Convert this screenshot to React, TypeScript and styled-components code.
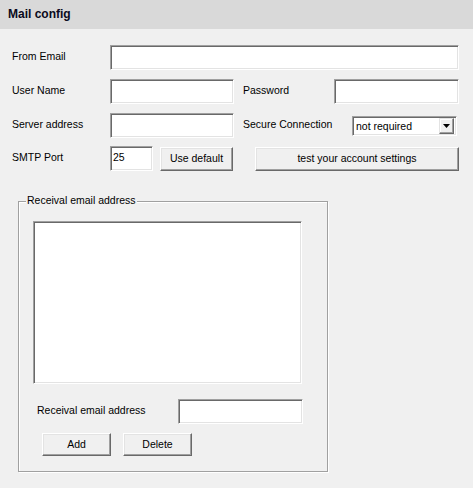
import styled, { createGlobalStyle } from "styled-components";

const GlobalStyle = createGlobalStyle`
  html, body {
    margin: 0;
    padding: 0;
    background: #f0f0f0;
  }
  body {
    font-family: "Liberation Sans", Arial, sans-serif;
    font-size: 10.5px;
    color: #000;
  }
`;

const Page = styled.div`
  width: 473px;
  height: 488px;
  background: #f0f0f0;
  overflow: hidden;
`;

const TitleBar = styled.div`
  height: 29px;
  line-height: 29px;
  padding-left: 8px;
  background: #d9d9d9;
  font-size: 12px;
  font-weight: bold;
  color: #0a0a20;
`;

const Form = styled.div`
  padding: 0 14px 0 12px;
`;

const Row = styled.div<{ $top: number }>`
  display: flex;
  align-items: center;
  height: 25px;
  margin-top: ${(p) => p.$top}px;
`;

const Label = styled.span<{ $width: number; $left?: number }>`
  flex: none;
  width: ${(p) => p.$width}px;
  margin-left: ${(p) => p.$left ?? 0}px;
  padding-bottom: 3px;
  white-space: nowrap;
`;

const Field = styled.input<{ $width: number; $height?: number }>`
  flex: none;
  box-sizing: border-box;
  width: ${(p) => p.$width}px;
  height: ${(p) => p.$height ?? 25}px;
  margin: 0;
  padding: 0 2px 4px;
  background: #fff;
  border: 1px solid;
  border-color: #a0a0a0 #fff #fff #a0a0a0;
  box-shadow: inset 1px 1px #696969, inset -1px -1px #e3e3e3;
  font: inherit;
  color: #000;
  outline: none;
  border-radius: 0;
`;

const Button = styled.button<{ $width: number; $left?: number; $height?: number }>`
  flex: none;
  box-sizing: border-box;
  width: ${(p) => p.$width}px;
  height: ${(p) => p.$height ?? 24}px;
  margin: 0 0 0 ${(p) => p.$left ?? 0}px;
  padding: 0 0 1px;
  background: #f0f0f0;
  border: 1px solid;
  border-color: #fff #696969 #696969 #fff;
  box-shadow: inset -1px -1px #a0a0a0, inset 1px 1px #e3e3e3;
  border-radius: 0;
  font: inherit;
  color: #000;
`;

const Select = styled.div`
  flex: none;
  box-sizing: border-box;
  display: flex;
  align-items: center;
  justify-content: space-between;
  width: 105px;
  height: 20px;
  padding: 2px;
  background: #fff;
  border: 1px solid;
  border-color: #a0a0a0 #fff #fff #a0a0a0;
  box-shadow: inset 1px 1px #696969, inset -1px -1px #e3e3e3;
`;

const SelectText = styled.span`
  padding-left: 1px;
`;

const ArrowButton = styled.span`
  box-sizing: border-box;
  display: flex;
  align-items: center;
  justify-content: center;
  width: 15px;
  height: 16px;
  background: #f0f0f0;
  border: 1px solid;
  border-color: #e3e3e3 #696969 #696969 #e3e3e3;
  box-shadow: inset -1px -1px #a0a0a0, inset 1px 1px #fff;
`;

const GroupBox = styled.div`
  position: relative;
  box-sizing: border-box;
  width: 310px;
  height: 271px;
  margin: 30px 0 0 6px;
  padding: 19px 0 0 14px;
  border: 1px solid #a0a0a0;
  box-shadow: inset 1px 1px #fff, 1px 1px #fff;
`;

const GroupTitle = styled.span`
  position: absolute;
  top: -8px;
  left: 7px;
  padding: 0 1px;
  line-height: 12px;
  background: #f0f0f0;
`;

const ListBox = styled.div`
  box-sizing: border-box;
  width: 269px;
  height: 163px;
  background: #fff;
  border: 1px solid;
  border-color: #a0a0a0 #fff #fff #a0a0a0;
  box-shadow: inset 1px 1px #696969, inset -1px -1px #e3e3e3;
`;

const ButtonRow = styled.div`
  display: flex;
  margin-top: 9px;
`;

export default function App() {
  return (
    <Page>
      <GlobalStyle />
      <TitleBar>Mail config</TitleBar>
      <Form>
        <Row $top={16}>
          <Label $width={98}>From Email</Label>
          <Field $width={349} />
        </Row>
        <Row $top={9}>
          <Label $width={98}>User Name</Label>
          <Field $width={124} />
          <Label $width={91} $left={9}>Password</Label>
          <Field $width={125} type="password" />
        </Row>
        <Row $top={9}>
          <Label $width={98}>Server address</Label>
          <Field $width={124} />
          <Label $width={109} $left={9}>Secure Connection</Label>
          <Select>
            <SelectText>not required</SelectText>
            <ArrowButton>
              <svg width="7" height="4" viewBox="0 0 7 4">
                <path d="M0 0H7L3.5 4Z" fill="#000" />
              </svg>
            </ArrowButton>
          </Select>
        </Row>
        <Row $top={8}>
          <Label $width={98}>SMTP Port</Label>
          <Field $width={43} defaultValue="25" />
          <Button $width={73} $left={7}>Use default</Button>
          <Button $width={204} $left={22}>test your account settings</Button>
        </Row>
        <GroupBox>
          <GroupTitle>Receival email address</GroupTitle>
          <ListBox />
          <Row $top={15}>
            <Label $width={141} $left={4}>Receival email address</Label>
            <Field $width={125} />
          </Row>
          <ButtonRow>
            <Button $width={69} $left={9} $height={23}>Add</Button>
            <Button $width={69} $left={12} $height={23}>Delete</Button>
          </ButtonRow>
        </GroupBox>
      </Form>
    </Page>
  );
}
